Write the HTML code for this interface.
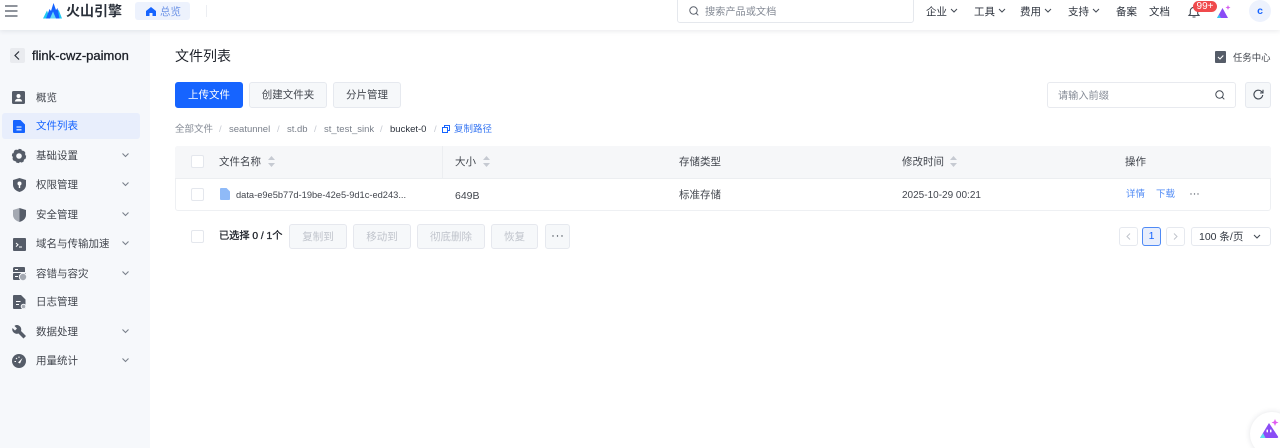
<!DOCTYPE html>
<html lang="zh"><head><meta charset="utf-8"><title>文件列表</title>
<style>
*{box-sizing:border-box}
html,body{margin:0;padding:0;width:1280px;height:448px;overflow:hidden;background:#fff}
body{font-family:"Liberation Sans","Noto Sans CJK SC",sans-serif;font-size:10.5px;color:#1d2129;position:relative}
.a{position:absolute;white-space:nowrap;line-height:14px}
.btn{position:absolute;border:1.5px solid #e6e9ef;border-radius:3px;background:#f6f8fa;text-align:center;color:#42464e;font-size:10.5px}
.dis{color:#c0c4cc;background:#f6f8fa;border-color:#e6e8ee}
svg{position:absolute;display:block;overflow:visible}
.nav{position:absolute;left:36px;color:#42464e;line-height:14px;font-size:10.5px;white-space:nowrap}
.cb{position:absolute;width:13px;height:13px;border:1.5px solid #e4e7ed;border-radius:2px;background:#fff}
.top{position:absolute;top:5px;line-height:14px;color:#303640;font-size:10.5px;white-space:nowrap}
.sep{position:absolute;top:123px;color:#c6cad2;line-height:14px;font-size:9.5px}
.bc{font-size:9.5px;top:123px}
</style></head><body>

<div style="position:absolute;left:0;top:30px;width:150px;height:418px;background:#f6f8fb"></div>
<div style="position:absolute;left:0;top:0;width:1280px;height:30px;background:#fff;box-shadow:0 1px 5px rgba(30,40,60,.10)"></div>

<svg style="left:5px;top:5px" width="13" height="12"><path d="M0 1h12.500M0 6h12.500M0 11h12.500" stroke="#4c5360" stroke-width="1.300"/></svg>
<svg style="left:43px;top:2px" width="20" height="17" viewBox="0 0 20 17"><path d="M0 16.500L4 8.500l3 8z" fill="#21c8f0"/><path d="M12.500 16.500L15.500 7.500l3.500 9z" fill="#21c8f0"/><path d="M3 16.500L6.500 7 8 9 10.500 1 13 8 14.500 6 16.500 16.500z" fill="#1664ff"/><path d="M7 16.500l3-7 3 7z" fill="#64d8f5"/></svg>
<div class="a" style="left:66px;top:1px;font-size:14px;line-height:20px;font-weight:700;color:#2a303a">火山引擎</div>
<div style="position:absolute;left:135px;top:2px;width:55px;height:18px;background:#edf2fd;border-radius:3px"></div>
<svg style="left:146px;top:7px" width="10" height="9" viewBox="0 0 10 9"><path d="M5 0L0 4v5h3.500V6h3v3H10V4z" fill="#1664ff"/></svg>
<div class="a" style="left:160px;top:5px;color:#6d93e6">总览</div>
<div style="position:absolute;left:206px;top:5px;width:1px;height:12px;background:#eceef2"></div>

<div style="position:absolute;left:677px;top:-4px;width:237px;height:27px;border:1px solid #e5e8ed;border-radius:3px;background:#fff"></div>
<svg style="left:689px;top:6px" width="10" height="10" fill="none" stroke="#5d636e" stroke-width="1"><circle cx="4.500" cy="4.500" r="3.700"/><path d="M7.300 7.300l2 2"/></svg>
<div class="a" style="left:705px;top:6px;color:#858b96;font-size:10.2px">搜索产品或文档</div>

<div class="top" style="left:926px">企业</div><svg style="left:950px;top:8px" width="8" height="6" fill="none" stroke="#444b55"><path d="M1 1l3 3 3-3"/></svg>
<div class="top" style="left:974px">工具</div><svg style="left:998px;top:8px" width="8" height="6" fill="none" stroke="#444b55"><path d="M1 1l3 3 3-3"/></svg>
<div class="top" style="left:1020px">费用</div><svg style="left:1044px;top:8px" width="8" height="6" fill="none" stroke="#444b55"><path d="M1 1l3 3 3-3"/></svg>
<div class="top" style="left:1068px">支持</div><svg style="left:1092px;top:8px" width="8" height="6" fill="none" stroke="#444b55"><path d="M1 1l3 3 3-3"/></svg>
<div class="top" style="left:1116px">备案</div>
<div class="top" style="left:1149px">文档</div>
<svg style="left:1188px;top:6px" width="12" height="12" viewBox="0 0 12 12" fill="none" stroke="#444b55" stroke-width="1.100"><path d="M1 9.500h10L9.700 8V5a3.700 3.700 0 0 0-7.400 0v3zM4.500 11h3"/></svg>
<div class="a" style="left:1193px;top:1px;width:24px;height:11px;border-radius:6px;background:#f04a4c;color:#fff;font-size:10px;line-height:11px;text-align:center">99+</div>
<svg style="left:1217px;top:5px" width="14" height="13" viewBox="0 0 14 13"><path d="M0 13L5.500 3 11 13z" fill="#8a4cf5"/><path d="M0 13L2 9.500 4 13z" fill="#34c8ef"/><path d="M11 0l.7 1.800 1.800.7-1.800.7-.7 1.800-.7-1.800-1.800-.7 1.800-.7z" fill="#d65cf0"/></svg>
<div style="position:absolute;left:1249px;top:0;width:22px;height:22px;border-radius:50%;background:#edf2fd"></div>
<div class="a" style="left:1249px;top:4px;width:22px;text-align:center;color:#1664ff;font-weight:700;font-size:10.500px">c</div>

<div style="position:absolute;left:10px;top:48px;width:15px;height:15px;border-radius:2px;background:#e9ebef"></div>
<svg style="left:14px;top:51px" width="7" height="9" fill="none" stroke="#2b303a" stroke-width="1.200"><path d="M5 .5l-4 4 4 4"/></svg>
<div class="a" style="left:32px;top:48px;font-size:13px;line-height:15px;color:#1d2129;-webkit-text-stroke:.3px #1d2129">flink-cwz-paimon</div>

<div style="position:absolute;left:2px;top:113px;width:138px;height:26px;border-radius:3px;background:#e8eefc"></div>

<svg style="left:12px;top:91px" width="13" height="13" viewBox="0 0 13 13"><rect width="13" height="13" rx="1.500" fill="#555c68"/><circle cx="6.500" cy="5" r="2" fill="#fff"/><path d="M2.800 10.500c.4-2 1.800-2.800 3.700-2.800s3.300.8 3.700 2.800z" fill="#fff"/></svg>
<div class="nav" style="top:91px">概览</div>

<svg style="left:13px;top:120px" width="12" height="13" viewBox="0 0 12 13"><path d="M1 0h6.500L12 4.500V12a1 1 0 0 1-1 1H1a1 1 0 0 1-1-1V1a1 1 0 0 1 1-1z" fill="#1664ff"/><path d="M3.500 7h5M3.500 9.800h5" stroke="#fff" stroke-width="1.100"/></svg>
<div class="nav" style="top:119px;color:#1664ff">文件列表</div>

<svg style="left:12px;top:149px" width="14" height="14" viewBox="0 0 14 14"><circle cx="7" cy="7" r="4.600" fill="none" stroke="#555c68" stroke-width="3.600"/><circle cx="7" cy="7" r="6.500" fill="none" stroke="#555c68" stroke-width="1.200" stroke-dasharray="3 2"/></svg>
<div class="nav" style="top:149px">基础设置</div>

<svg style="left:13px;top:178px" width="13" height="14" viewBox="0 0 13 14"><path d="M6.500 0L13 2v5c0 3.500-3 6-6.500 7C3 13 0 10.500 0 7V2z" fill="#555c68"/><circle cx="6.500" cy="5.500" r="2" fill="#fff"/><rect x="5.800" y="6.500" width="1.400" height="3.500" fill="#fff"/></svg>
<div class="nav" style="top:178px">权限管理</div>

<svg style="left:13px;top:208px" width="13" height="14" viewBox="0 0 13 14"><path d="M6.500 0L13 2v5c0 3.500-3 6-6.500 7z" fill="#555c68"/><path d="M6.500 0L0 2v5c0 3.500 3 6 6.500 7z" fill="#a4a9b2"/></svg>
<div class="nav" style="top:208px">安全管理</div>

<svg style="left:13px;top:238px" width="13" height="13" viewBox="0 0 13 13"><rect width="13" height="13" rx="1" fill="#555c68"/><path d="M3 5l2 1.800L3 8.600" stroke="#fff" fill="none"/><path d="M6 9h3" stroke="#fff"/></svg>
<div class="nav" style="top:237px">域名与传输加速</div>

<svg style="left:13px;top:267px" width="14" height="14" viewBox="0 0 14 14"><path d="M2 0h9a1 1 0 0 1 1 1v4H0V1a2 2 0 0 1 2-1z" fill="#555c68"/><rect y="6" width="13" height="7" rx="1" fill="#555c68"/><circle cx="10" cy="10" r="3.700" fill="#a4a9b2" stroke="#f6f8fb"/><rect x="2" y="2" width="3" height="1" fill="#fff"/><rect x="2" y="9" width="3" height="1" fill="#fff"/></svg>
<div class="nav" style="top:267px">容错与容灾</div>

<svg style="left:13px;top:295px" width="13" height="14" viewBox="0 0 13 14"><path d="M1 0h7l4.500 4.500V13a1 1 0 0 1-1 1H1a1 1 0 0 1-1-1V1a1 1 0 0 1 1-1z" fill="#555c68"/><path d="M3 6.500h4.500M3 9.500h3" stroke="#fff"/><circle cx="10.500" cy="11.500" r="2.300" fill="#a4a9b2" stroke="#f6f8fb"/></svg>
<div class="nav" style="top:295px">日志管理</div>

<svg style="left:12px;top:325px" width="14" height="14" viewBox="0 0 14 14"><path d="M5 0a4.500 4.500 0 0 1 4 6l5 5-2.500 2.500-5-5A4.500 4.500 0 0 1 .5 3L3 5.500 5 3.500 2.500 1C3 .3 4 0 5 0z" fill="#555c68"/></svg>
<div class="nav" style="top:325px">数据处理</div>

<svg style="left:12px;top:354px" width="14" height="14" viewBox="0 0 14 14"><circle cx="7" cy="7" r="7" fill="#555c68"/><path d="M6 8.500L10.500 4 8 9.500z" fill="#fff"/><path d="M2.500 7.500h1.500M7 2.500V4M4 4l1 1" stroke="#fff"/></svg>
<div class="nav" style="top:354px">用量统计</div>

<svg style="left:122px;top:153px" width="7" height="5" fill="none" stroke="#7a808b" stroke-width="1.100"><path d="M.5 .5L3.500 3.500 6.500 .5"/></svg>
<svg style="left:122px;top:182px" width="7" height="5" fill="none" stroke="#7a808b" stroke-width="1.100"><path d="M.5 .5L3.500 3.500 6.500 .5"/></svg>
<svg style="left:122px;top:212px" width="7" height="5" fill="none" stroke="#7a808b" stroke-width="1.100"><path d="M.5 .5L3.500 3.500 6.500 .5"/></svg>
<svg style="left:122px;top:241px" width="7" height="5" fill="none" stroke="#7a808b" stroke-width="1.100"><path d="M.5 .5L3.500 3.500 6.500 .5"/></svg>
<svg style="left:122px;top:271px" width="7" height="5" fill="none" stroke="#7a808b" stroke-width="1.100"><path d="M.5 .5L3.500 3.500 6.500 .5"/></svg>
<svg style="left:122px;top:329px" width="7" height="5" fill="none" stroke="#7a808b" stroke-width="1.100"><path d="M.5 .5L3.500 3.500 6.500 .5"/></svg>
<svg style="left:122px;top:358px" width="7" height="5" fill="none" stroke="#7a808b" stroke-width="1.100"><path d="M.5 .5L3.500 3.500 6.500 .5"/></svg>

<div class="a" style="left:175px;top:46px;font-size:14px;line-height:20px;color:#1d2129">文件列表</div>
<svg style="left:1215px;top:51px" width="11" height="12" viewBox="0 0 11 12"><rect width="11" height="12" rx="1" fill="#555c68"/><path d="M3 6l2 2 3.300-3.500" fill="none" stroke="#fff" stroke-width="1.100"/></svg>
<div class="a" style="left:1233px;top:50.500px;color:#42464e;font-size:9.400px">任务中心</div>

<div class="btn" style="left:175px;top:82px;width:68px;height:26px;line-height:25px;background:#1664ff;border-color:#1664ff;color:#fff">上传文件</div>
<div class="btn" style="left:249px;top:82px;width:78px;height:26px;line-height:25px">创建文件夹</div>
<div class="btn" style="left:333px;top:82px;width:68px;height:26px;line-height:25px">分片管理</div>

<div style="position:absolute;left:1047px;top:82px;width:189px;height:26px;border:1.500px solid #e8eaef;border-radius:3px"></div>
<div class="a" style="left:1058px;top:89.500px;color:#858b96;font-size:10.2px">请输入前缀</div>
<svg style="left:1215px;top:90px" width="10" height="10" fill="none" stroke="#444b55" stroke-width="1"><circle cx="4.500" cy="4.500" r="3.700"/><path d="M7.300 7.300l2 2"/></svg>
<div class="btn" style="left:1245px;top:82px;width:26px;height:26px"></div>
<svg style="left:1253px;top:89px" width="11" height="11" viewBox="0 0 11 11" fill="none" stroke="#444b55" stroke-width="1.100"><path d="M9.700 6a4.400 4.400 0 1 1-1.200-3.500L10 4M10 .8V4H7"/></svg>

<div class="a bc" style="left:175px;color:#858b96">全部文件</div><div class="sep" style="left:219px">/</div>
<div class="a bc" style="left:229px;color:#7a808b">seatunnel</div><div class="sep" style="left:277px">/</div>
<div class="a bc" style="left:287px;color:#7a808b">st.db</div><div class="sep" style="left:314px">/</div>
<div class="a bc" style="left:324px;color:#7a808b">st_test_sink</div><div class="sep" style="left:380px">/</div>
<div class="a bc" style="left:390px;color:#2a303a">bucket-0</div><div class="sep" style="left:434px">/</div>
<svg style="left:442px;top:125px" width="8" height="8" fill="none" stroke="#1664ff"><path d="M2.500 2V.5h5v5H6M.5 2.500h5v5h-5z"/></svg>
<div class="a bc" style="left:454px;color:#3a78f2">复制路径</div>

<div style="position:absolute;left:175px;top:146px;width:1096px;height:65px;border:1px solid #eef0f3;border-radius:3px"></div>
<div style="position:absolute;left:175px;top:146px;width:1096px;height:33px;background:#f6f7f9;border-radius:3px 3px 0 0;border-bottom:1px solid #eceef1"></div>
<div style="position:absolute;left:442px;top:146px;width:1px;height:32px;background:#eceef1"></div>

<div class="cb" style="left:191px;top:155px"></div>
<div class="a" style="left:219px;top:155px;color:#42464e">文件名称</div>
<svg style="left:268px;top:156px" width="7" height="11" fill="#c6cad2"><path d="M3.500 0L7 4H0zM3.500 11L0 7h7z"/></svg>
<div class="a" style="left:455px;top:155px;color:#42464e">大小</div>
<svg style="left:483px;top:156px" width="7" height="11" fill="#c6cad2"><path d="M3.500 0L7 4H0zM3.500 11L0 7h7z"/></svg>
<div class="a" style="left:679px;top:155px;color:#42464e">存储类型</div>
<div class="a" style="left:902px;top:155px;color:#42464e">修改时间</div>
<svg style="left:950px;top:156px" width="7" height="11" fill="#c6cad2"><path d="M3.500 0L7 4H0zM3.500 11L0 7h7z"/></svg>
<div class="a" style="left:1125px;top:155px;color:#42464e">操作</div>

<div class="cb" style="left:191px;top:188px"></div>
<svg style="left:220px;top:188px" width="10" height="12" viewBox="0 0 10 12"><path d="M1 0h5.500L10 3.500V11a1 1 0 0 1-1 1H1a1 1 0 0 1-1-1V1a1 1 0 0 1 1-1z" fill="#8fbaf8"/></svg>
<div class="a" style="left:236px;top:187.500px;color:#42464e;font-size:9.300px">data-e9e5b77d-19be-42e5-9d1c-ed243...</div>
<div class="a" style="left:455px;top:188.500px;color:#42464e;font-size:10.500px">649B</div>
<div class="a" style="left:679px;top:188px;color:#42464e">标准存储</div>
<div class="a" style="left:902px;top:188.500px;color:#42464e;font-size:10px">2025-10-29 00:21</div>
<div class="a" style="left:1126px;top:188px;color:#4f8af5;font-size:9.500px">详情</div>
<div class="a" style="left:1156px;top:188px;color:#4f8af5;font-size:9.500px">下载</div>
<svg style="left:1190px;top:193px" width="9" height="2" fill="#666c76"><circle cx="1" cy="1" r=".7"/><circle cx="4.500" cy="1" r=".7"/><circle cx="8" cy="1" r=".7"/></svg>

<div class="cb" style="left:191px;top:230px"></div>
<div class="a" style="left:219px;top:230px;color:#1d2129;font-size:10.200px;font-weight:400;-webkit-text-stroke:.3px #1d2129">已选择 0 / 1个</div>
<div class="btn dis" style="left:289px;top:224px;width:58px;height:25px;line-height:24px">复制到</div>
<div class="btn dis" style="left:353px;top:224px;width:58px;height:25px;line-height:24px">移动到</div>
<div class="btn dis" style="left:417px;top:224px;width:68px;height:25px;line-height:24px">彻底删除</div>
<div class="btn dis" style="left:491px;top:224px;width:47px;height:25px;line-height:24px">恢复</div>
<div class="btn" style="left:545px;top:224px;width:25px;height:25px"></div>
<svg style="left:552px;top:235px" width="11" height="2" fill="#444b55"><circle cx="1" cy="1" r=".7"/><circle cx="5.500" cy="1" r=".7"/><circle cx="10" cy="1" r=".7"/></svg>

<div class="btn" style="left:1119px;top:227px;width:19px;height:19px;background:#fff"></div>
<svg style="left:1126px;top:233px" width="5" height="7" fill="none" stroke="#c0c4cc"><path d="M4 .5l-3 3 3 3"/></svg>
<div class="btn" style="left:1142px;top:227px;width:19px;height:19px;background:#e8eefc;border-color:#4f8af5;color:#1664ff;line-height:17px">1</div>
<div class="btn" style="left:1166px;top:227px;width:19px;height:19px;background:#fff"></div>
<svg style="left:1173px;top:233px" width="5" height="7" fill="none" stroke="#c0c4cc"><path d="M1 .5l3 3-3 3"/></svg>
<div class="btn" style="left:1191px;top:227px;width:80px;height:19px;background:#fff"></div>
<div class="a" style="left:1199px;top:230px;color:#303640">100 条/页</div>
<svg style="left:1253px;top:234px" width="8" height="6" fill="none" stroke="#444b55" stroke-width="1.100"><path d="M1 1l3 3 3-3"/></svg>

<div style="position:absolute;left:1250px;top:412px;width:44px;height:44px;border-radius:50%;background:#fff;box-shadow:0 0 6px rgba(30,40,60,.13)"></div>
<svg style="left:1260px;top:419px" width="20" height="20" viewBox="0 0 20 20"><path d="M0 19L9 4 18 17.500Q18.500 19 17 19z" fill="#8a4cf5"/><path d="M0 19L3 14 5.500 19z" fill="#5fe0ee"/><path d="M15 0l1 2.500 2.500 1-2.500 1-1 2.500-1-2.500-2.500-1 2.500-1z" fill="#e05cf0"/><rect x="6.500" y="10.500" width="1.500" height="3" rx=".7" fill="#fff"/><rect x="10" y="10.500" width="1.500" height="3" rx=".7" fill="#fff"/></svg>

</body></html>
